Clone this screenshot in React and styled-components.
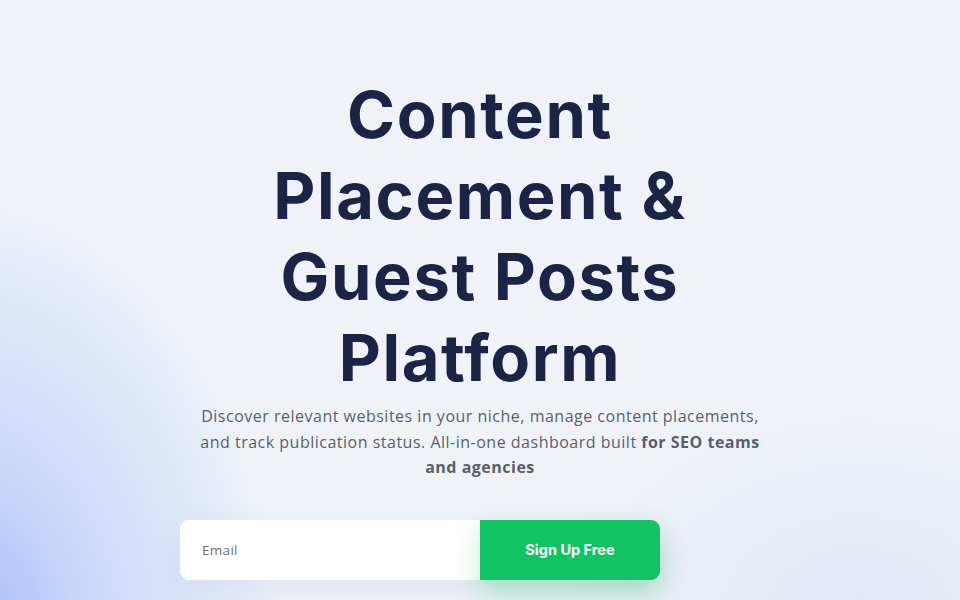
import styled, { createGlobalStyle } from 'styled-components';

const GlobalStyle = createGlobalStyle`
  * {
    box-sizing: border-box;
  }

  html,
  body {
    margin: 0;
    height: 100%;
  }

  body {
    background: #eff3f8;
    font-family: 'Inter', 'Open Sans', sans-serif;
  }
`;

function App() {
  return (
    <>
      <GlobalStyle />
      <Hero>
        <Title>
          Content
          <br />
          Placement &amp;
          <br />
          Guest Posts
          <br />
          Platform
        </Title>
        <Lead>
          Discover relevant websites in your niche, manage content placements,
          and track publication status. All-in-one dashboard built{' '}
          <strong>for SEO teams and agencies</strong>
        </Lead>
        <FormRow>
          <SignupForm onSubmit={(e) => e.preventDefault()}>
            <EmailInput type="email" placeholder="Email" />
            <SubmitButton type="submit">Sign Up Free</SubmitButton>
          </SignupForm>
        </FormRow>
      </Hero>
    </>
  );
}

export default App;

const Hero = styled.main`
  overflow: hidden;
  min-height: 600px;
  padding-top: 74px;
  display: flex;
  flex-direction: column;
  align-items: center;
  background:
    radial-gradient(ellipse 320px 460px at -40px 650px, rgba(160, 182, 250, 1), rgba(186, 203, 250, 0.7) 40%, rgba(239, 243, 248, 0) 100%),
    radial-gradient(ellipse 320px 220px at 860px 610px, rgba(224, 231, 245, 0.8), rgba(239, 243, 248, 0) 100%),
    #eff3f8;
`;

const Title = styled.h1`
  margin: 0;
  color: #1b2446;
  font-family: 'Inter', sans-serif;
  font-size: 65px;
  font-weight: 700;
  line-height: 81px;
  letter-spacing: 1.6px;
  text-align: center;
`;

const Lead = styled.p`
  margin: 6px 0 0;
  max-width: 590px;
  color: #585f6d;
  font-family: 'Open Sans', sans-serif;
  font-size: 16px;
  line-height: 25.5px;
  letter-spacing: 0.5px;
  text-align: center;

  strong {
    font-weight: 700;
  }
`;

const FormRow = styled.div`
  margin-top: 39px;
  width: 600px;
  display: flex;
`;

const SignupForm = styled.form`
  width: 480px;
  height: 60px;
  display: flex;
  border-radius: 9px;
  box-shadow: 0 10px 30px rgba(120, 140, 180, 0.12);
`;

const EmailInput = styled.input`
  flex: 1;
  min-width: 0;
  padding: 0 22px;
  border: none;
  border-radius: 9px 0 0 9px;
  background: #fff;
  color: #333;
  font-family: 'Open Sans', sans-serif;
  font-size: 13.5px;
  letter-spacing: 0.3px;
  outline: none;

  &::placeholder {
    color: #6e7075;
  }
`;

const SubmitButton = styled.button`
  width: 180px;
  border: none;
  border-radius: 0 9px 9px 0;
  background: #12c265;
  color: #fff;
  font-family: 'Inter', sans-serif;
  font-size: 14.5px;
  font-weight: 700;
  cursor: pointer;
  box-shadow: 0 12px 26px rgba(18, 194, 101, 0.3);
`;
